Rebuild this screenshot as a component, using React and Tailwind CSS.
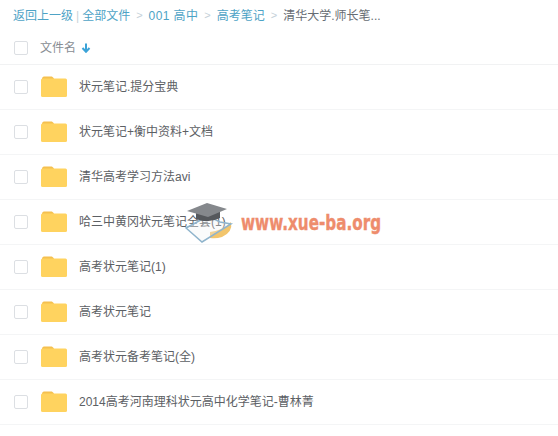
const files = [
  '状元笔记.提分宝典',
  '状元笔记+衡中资料+文档',
  '清华高考学习方法avi',
  '哈三中黄冈状元笔记全套(1)',
  '高考状元笔记(1)',
  '高考状元笔记',
  '高考状元备考笔记(全)',
  '2014高考河南理科状元高中化学笔记-曹林菁',
]

function Checkbox() {
  return <span className="block w-[14px] h-[14px] border border-[#dcdfe3] rounded-[2px] bg-white shrink-0" />
}

function Folder() {
  return (
    <svg width="26" height="21" viewBox="0 0 26 21" className="shrink-0 -mt-[1px]">
      <path d="M1 3C1 1.5 1.8 0.5 3 0.5h7c1.2 0 2 .6 2.6 1.6L13 3H1z" fill="#f5c04f" />
      <rect x="0" y="2.5" width="26" height="18.5" rx="1.5" fill="#ffd35f" />
    </svg>
  )
}

function Sep() {
  return <span className="text-[#c4d0d8] mx-[6px] text-[11px]">&gt;</span>
}

function Row({ name }) {
  return (
    <div className="h-[45px] flex items-center border-b border-[#f4f5f6] pl-[14px]">
      <Checkbox />
      <div className="ml-[13px] flex"><Folder /></div>
      <span className="ml-[12px] text-[12px] text-[#5c6064]">{name}</span>
    </div>
  )
}

export default function App() {
  return (
    <div className="relative w-[558px] h-[436px] bg-white overflow-hidden font-['Liberation_Sans','Noto_Sans_CJK_SC',sans-serif]">
      <div className="h-[31px] flex items-center pl-[13px] text-[12px] text-[#4ea3c6] whitespace-nowrap">
        <span>返回上一级</span>
        <span className="mx-[3px] text-[#c9d3d9]">|</span>
        <span>全部文件</span>
        <Sep />
        <span className="tracking-[0.4px]">001 高中</span>
        <Sep />
        <span>高考笔记</span>
        <Sep />
        <span className="text-[#666c73]">清华大学.师长笔...</span>
      </div>
      <div className="h-[34px] flex items-center border-b border-[#f1f2f3] pl-[14px]">
        <Checkbox />
        <span className="ml-[12px] text-[12px] text-[#888d93]">文件名</span>
        <svg width="10" height="10" viewBox="0 0 10 10" className="ml-[5px]">
          <path d="M5 .5v8M1.5 5L5 8.8 8.5 5" fill="none" stroke="#3ba3d8" strokeWidth="2" />
        </svg>
      </div>
      {files.map(name => <Row key={name} name={name} />)}

      {/* site watermark over the list */}
      <div className="absolute left-[184px] top-[202px] flex items-center">
        <svg width="50" height="46" viewBox="0 0 50 46">
          <path d="M26 30 Q40 28 47 20 Q49 30 38 35 Q32 37 26 36 Z" fill="#f2c56c" />
          <path d="M2 26 L24 14 L36 20 L47 22 L18 40 Z" fill="#eef1f3" fillOpacity="0.3" stroke="#8fb4cc" strokeWidth="1.5" />
          <path d="M12 10 L12 17 Q24 22 36 16 L36 10 Z" fill="#55585c" />
          <path d="M3 9 L23 1 L43 7 L24 15 Z" fill="#85888c" />
        </svg>
        <span className="ml-[7px] -mt-[2px] text-[21px] font-bold text-[#ee8c6c] scale-x-[0.725] origin-left font-['DejaVu_Sans',sans-serif] [-webkit-text-stroke:0.4px_#ee8c6c]">www.xue-ba.org</span>
      </div>
    </div>
  )
}
